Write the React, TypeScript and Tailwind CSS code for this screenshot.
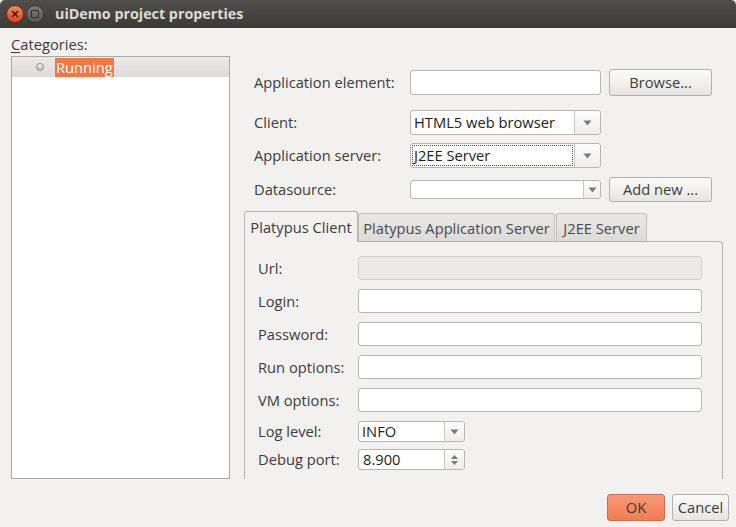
import React from "react";

const font = { fontFamily: '"Open Sans", "Noto Sans", sans-serif' };

function Arrow() {
  return (
    <svg width="9" height="6" viewBox="0 0 9 6" className="block">
      <path d="M0.5 0.5 L8.5 0.5 L4.5 5.5 Z" fill="#7a7a7a" />
    </svg>
  );
}

function Input({ disabled = false, className = "" }: { disabled?: boolean; className?: string }) {
  return (
    <div
      className={`h-[24px] rounded-[3px] border ${
        disabled ? "bg-[#ebeae9] border-[#d3d0cc]" : "bg-white border-[#b9b6b1]"
      } ${className}`}
    />
  );
}

function Button({ label, className = "" }: { label: string; className?: string }) {
  return (
    <div
      className={`flex items-center justify-center rounded-[3px] border border-[#b3b0ab] bg-gradient-to-b from-[#fbfbfa] to-[#e6e5e3] text-[#3c3c3c] ${className}`}
    >
      {label}
    </div>
  );
}

function Combo({
  value,
  w,
  h,
  arrowW,
  focus = false,
}: {
  value: string;
  w: string;
  h: string;
  arrowW: string;
  focus?: boolean;
}) {
  return (
    <div className={`flex rounded-[3px] border border-[#b9b6b1] bg-white ${w} ${h}`}>
      <div className="relative flex flex-1 items-center pl-[3px] text-[#222]">
        {focus && (
          <div className="absolute inset-[1px] border border-dotted border-[#555]" />
        )}
        <span className="relative">{value}</span>
      </div>
      <div
        className={`flex items-center justify-center border-l border-[#c9c6c2] bg-gradient-to-b from-[#fdfdfd] to-[#eeedec] rounded-r-[3px] ${arrowW}`}
      >
        <Arrow />
      </div>
    </div>
  );
}

export default function App() {
  return (
    <div
      className="relative h-[527px] w-[736px] overflow-hidden bg-[#f2f1f0] text-[14.7px] text-[#3c3c3c]"
      style={font}
    >
      {/* Title bar */}
      <div className="flex h-[28px] items-center bg-gradient-to-b from-[#4f4e4a] to-[#3c3b37] rounded-t-[5px]">
        <div className="ml-[6px] flex h-[18px] w-[18px] items-center justify-center rounded-full border border-[#7a2a10] bg-gradient-to-b from-[#f7835a] to-[#dd4814]">
          <svg width="8" height="8" viewBox="0 0 8 8">
            <path d="M1 1 L7 7 M7 1 L1 7" stroke="#3c1a0c" strokeWidth="1.6" />
          </svg>
        </div>
        <div className="ml-[2px] flex h-[18px] w-[18px] items-center justify-center rounded-full border border-[#3a3935] bg-gradient-to-b from-[#7b7a75] to-[#5a5955]">
          <div className="h-[8px] w-[8px] rounded-[1px] border-[1.5px] border-[#2f2e2b]" />
        </div>
        <div className="ml-[11px] text-[14.3px] font-bold text-[#dfdbd2]">uiDemo project properties</div>
      </div>

      {/* Main */}
      <div className="flex h-[451px]">
        {/* Left column */}
        <div className="ml-[11px] flex w-[219px] flex-col">
          <div className="mt-[7px] h-[21px] leading-[18px] text-[#3c3c3c]">
            <span className="underline decoration-1 underline-offset-2">C</span>ategories:
          </div>
          <div className="flex-1 border border-[#a9a8a6] bg-white">
            <div className="flex h-[20px] items-center bg-gradient-to-b from-[#ebeae9] to-[#dcdbd9]">
              <div className="ml-[24px] h-[8px] w-[8px] rounded-full border border-[#8a8a8a] bg-gradient-to-b from-[#f4f4f4] to-[#bdbdbd]" />
              <div className="ml-[11px] flex h-[19px] items-center bg-[#f07746] px-[1px] text-white">Running</div>
            </div>
          </div>
        </div>

        {/* Right column */}
        <div className="ml-[14px] flex w-[479px] flex-col">
          <div className="mt-[41px] flex h-[27px] items-center">
            <div className="w-[166px] shrink-0 pl-[10px]">Application element:</div>
            <Input className="h-[25px] w-[191px]" />
            <Button label="Browse..." className="ml-[8px] h-[27px] w-[103px]" />
          </div>
          <div className="mt-[14px] flex h-[25px] items-center">
            <div className="w-[166px] shrink-0 pl-[10px]">Client:</div>
            <Combo value="HTML5 web browser" w="w-[191px]" h="h-[25px]" arrowW="w-[26px]" />
          </div>
          <div className="mt-[8px] flex h-[25px] items-center">
            <div className="w-[166px] shrink-0 pl-[10px]">Application server:</div>
            <Combo value="J2EE Server" w="w-[191px]" h="h-[25px]" arrowW="w-[26px]" focus />
          </div>
          <div className="mt-[9px] flex h-[25px] items-center">
            <div className="w-[166px] shrink-0 pl-[10px]">Datasource:</div>
            <Combo value="" w="w-[191px]" h="h-[19px]" arrowW="w-[17px]" />
            <Button label="Add new ..." className="ml-[8px] h-[25px] w-[103px]" />
          </div>

          {/* Tabs */}
          <div className="mt-[9px] flex h-[30px] items-end">
            <div className="relative z-10 -mb-px flex h-[31px] w-[114px] items-center justify-center rounded-t-[3px] border border-b-0 border-[#b6b3ae] bg-[#f2f1f0] pt-[1px]">
              Platypus Client
            </div>
            <div className="flex h-[28px] w-[197px] items-center justify-center rounded-t-[3px] border border-b-0 border-[#c3c0bb] bg-gradient-to-b from-[#e9e8e7] to-[#dcdbd9] pt-[1px] text-[#4a4a4a]">
              Platypus Application Server
            </div>
            <div className="ml-[1px] flex h-[28px] w-[91px] items-center justify-center rounded-t-[3px] border border-b-0 border-[#c3c0bb] bg-gradient-to-b from-[#e9e8e7] to-[#dcdbd9] pt-[1px] text-[#4a4a4a]">
              J2EE Server
            </div>
          </div>
          <div className="flex flex-1 flex-col rounded-tr-[4px] border border-b-0 border-[#b6b3ae]">
            {[
              ["Url:", true],
              ["Login:", false],
              ["Password:", false],
              ["Run options:", false],
              ["VM options:", false],
            ].map(([label, dis], i) => (
              <div key={i} className={`${i === 0 ? "mt-[14px]" : "mt-[9px]"} flex h-[24px] items-center`}>
                <div className="w-[113px] shrink-0 pl-[13px]">{label as string}</div>
                <Input disabled={dis as boolean} className="w-[344px]" />
              </div>
            ))}
            <div className="mt-[9px] flex h-[21px] items-center">
              <div className="w-[113px] shrink-0 pl-[13px]">Log level:</div>
              <Combo value="INFO" w="w-[107px]" h="h-[21px]" arrowW="w-[20px]" />
            </div>
            <div className="mt-[7px] flex h-[21px] items-center">
              <div className="w-[113px] shrink-0 pl-[13px]">Debug port:</div>
              <div className="flex h-[21px] w-[107px] rounded-[3px] border border-[#b9b6b1] bg-white">
                <div className="flex flex-1 items-center pl-[4px] text-[#222]">8.900</div>
                <div className="flex w-[20px] flex-col items-center justify-center gap-[2px] rounded-r-[3px] border-l border-[#c9c6c2] bg-gradient-to-b from-[#fdfdfd] to-[#eeedec]">
                  <svg width="7" height="4" viewBox="0 0 7 4" className="block">
                    <path d="M0 4 L7 4 L3.5 0 Z" fill="#7a7a7a" />
                  </svg>
                  <svg width="7" height="4" viewBox="0 0 7 4" className="block">
                    <path d="M0 0 L7 0 L3.5 4 Z" fill="#7a7a7a" />
                  </svg>
                </div>
              </div>
            </div>
          </div>
        </div>
      </div>

      {/* Bottom buttons */}
      <div className="mt-[15px] flex justify-end pr-[7px]">
        <div className="flex h-[27px] w-[58px] items-center justify-center rounded-[3px] border border-[#c0724f] bg-gradient-to-b from-[#fa9874] to-[#f07c52] text-[#3c3c3c]">
          OK
        </div>
        <Button label="Cancel" className="ml-[7px] h-[27px] w-[57px]" />
      </div>
    </div>
  );
}
